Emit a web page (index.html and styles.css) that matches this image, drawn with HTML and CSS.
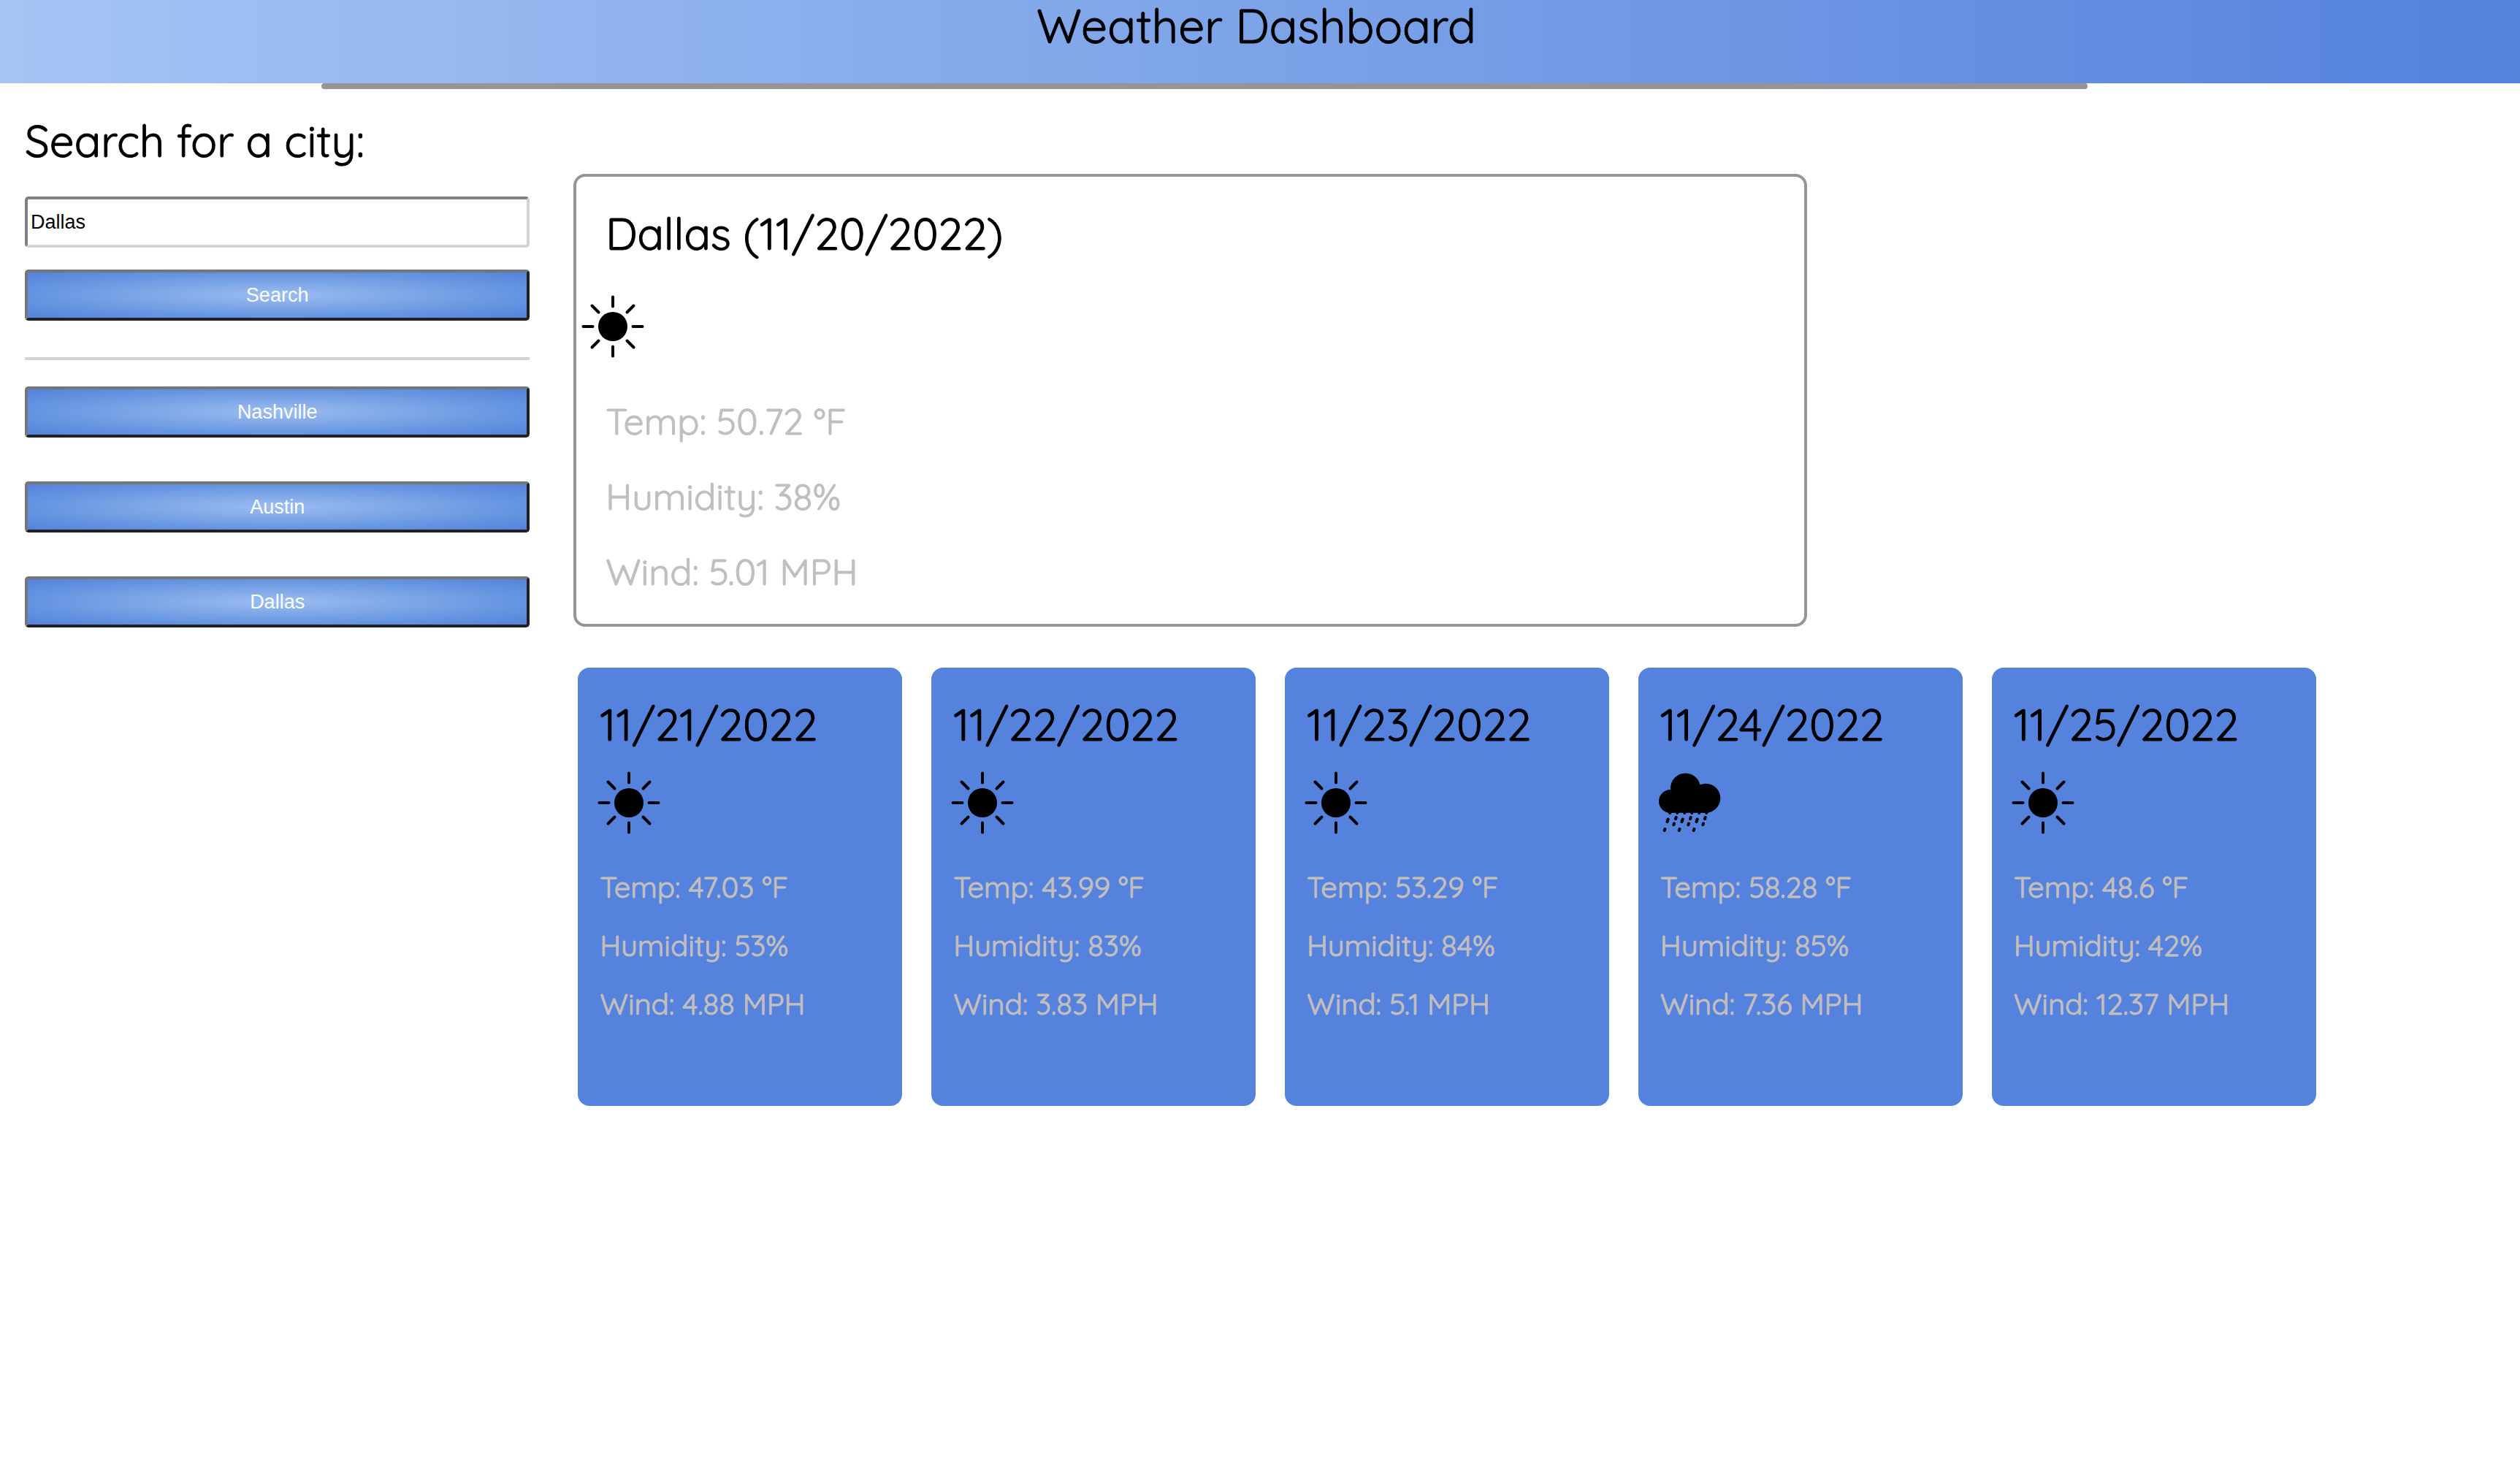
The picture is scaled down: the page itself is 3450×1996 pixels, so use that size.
FILE: index.html
```html
<!DOCTYPE html>
<html lang="en">
<head>
  <meta charset="UTF-8">
  <meta name="viewport" content="width=device-width, initial-scale=1">
  <title>Weather Dashboard</title>
  <link rel="stylesheet" href="styles.css">
</head>
<body>
  <svg class="sprite" aria-hidden="true">
    <symbol id="icon-sun" viewBox="0 0 100 100">
      <circle cx="50" cy="50" r="20"/>
      <path d="M50 9.500V22.500M50 77.500V90.500M9.500 50H22.500M77.500 50H90.500M21.500 21.500L30.500 30.500M69.500 69.500L78.500 78.500M21.500 78.500L30.500 69.500M69.500 30.500L78.500 21.500" fill="none" stroke="#000" stroke-width="4" stroke-linecap="round"/>
    </symbol>
    <symbol id="icon-rain" viewBox="0 0 100 100">
      <circle cx="24" cy="48" r="16"/>
      <circle cx="44.500" cy="30" r="20.500"/>
      <circle cx="72.300" cy="43.700" r="20"/>
      <path d="M24 36H72V63.700H24Z"/>
      <path d="M23.600 63L23.300 64M33.600 63L33.300 64M43.600 63L43.300 64M53.600 63L53.300 64M63.600 63L63.300 64M73.600 63L73.300 64M31.700 70L31 72M51.700 70L51 72M71.700 70L71 72M20.700 72.500L19.500 76M40.700 72.500L39.500 76M60.700 72.500L59.500 76M29 78.500L28.400 80.200M49 78.500L48.400 80.200M69 78.500L68.400 80.200M16.400 86L15.800 88M36.400 86L35.800 88M56.400 86L55.800 88" fill="none" stroke="#000" stroke-width="4" stroke-linecap="round"/>
    </symbol>
  </svg>

  <header class="page-header">
    <h1>Weather Dashboard</h1>
  </header>
  <hr class="header-rule">

  <main class="layout">
    <aside class="sidebar">
      <form class="search" onsubmit="return false">
        <label for="city">Search for a city:</label>
        <input id="city" class="city-input" type="text" value="Dallas">
        <button class="btn" type="submit">Search</button>
      </form>
      <hr class="divider">
      <div class="history">
        <button class="btn" type="button">Nashville</button>
        <button class="btn" type="button">Austin</button>
        <button class="btn" type="button">Dallas</button>
      </div>
    </aside>

    <div class="content">
      <section class="current">
        <h2>Dallas (11/20/2022)</h2>
        <svg class="icon" role="img" aria-label="Clear"><use href="#icon-sun"/></svg>
        <div class="readings">
          <p>Temp: 50.72 °F</p>
          <p>Humidity: 38%</p>
          <p>Wind: 5.01 MPH</p>
        </div>
      </section>

      <section class="forecast">
        <article class="day">
          <h2>11/21/2022</h2>
          <svg class="icon" role="img" aria-label="Clear"><use href="#icon-sun"/></svg>
          <div class="readings">
            <p>Temp: 47.03 °F</p>
            <p>Humidity: 53%</p>
            <p>Wind: 4.88 MPH</p>
          </div>
        </article>
        <article class="day">
          <h2>11/22/2022</h2>
          <svg class="icon" role="img" aria-label="Clear"><use href="#icon-sun"/></svg>
          <div class="readings">
            <p>Temp: 43.99 °F</p>
            <p>Humidity: 83%</p>
            <p>Wind: 3.83 MPH</p>
          </div>
        </article>
        <article class="day">
          <h2>11/23/2022</h2>
          <svg class="icon" role="img" aria-label="Clear"><use href="#icon-sun"/></svg>
          <div class="readings">
            <p>Temp: 53.29 °F</p>
            <p>Humidity: 84%</p>
            <p>Wind: 5.1 MPH</p>
          </div>
        </article>
        <article class="day">
          <h2>11/24/2022</h2>
          <svg class="icon" role="img" aria-label="Rain"><use href="#icon-rain"/></svg>
          <div class="readings">
            <p>Temp: 58.28 °F</p>
            <p>Humidity: 85%</p>
            <p>Wind: 7.36 MPH</p>
          </div>
        </article>
        <article class="day">
          <h2>11/25/2022</h2>
          <svg class="icon" role="img" aria-label="Clear"><use href="#icon-sun"/></svg>
          <div class="readings">
            <p>Temp: 48.6 °F</p>
            <p>Humidity: 42%</p>
            <p>Wind: 12.37 MPH</p>
          </div>
        </article>
      </section>
    </div>
  </main>
</body>
</html>
```
FILE: styles.css
```css
:root {
  --blue: #5482dc;
  --blue-light: #a4c4f4;
  --gray: #969494;
  --muted: #c2bebe;
}

* {
  box-sizing: border-box;
}

body {
  margin: 0;
  background: #fff;
  color: #000;
  font-family: Quicksand, Lato, sans-serif;
}

h1,
h2,
p {
  margin: 0;
}

/* A hairline outline gives the light typeface a little more weight */
h1,
h2,
label,
.readings {
  font-weight: 400;
  -webkit-text-stroke: 1px currentColor;
}

.sprite {
  display: none;
}

/* Header */
.page-header {
  min-height: 114px;
  padding-right: 10px;
  background: linear-gradient(to right, var(--blue-light), var(--blue));
  text-align: center;
}

.page-header h1 {
  font-size: 64px;
  line-height: 70px;
}

.header-rule {
  width: 70.1%;
  height: 8px;
  margin: 0 0 0 12.75%;
  border: 0;
  border-radius: 4px;
  background: var(--gray);
}

/* Two-column layout */
.layout {
  display: flex;
  gap: 60px;
  padding: 0 8.1% 0 34px;
}

.sidebar {
  flex: none;
  width: 22.04%;
  padding-top: 33px;
}

.search {
  display: flex;
  flex-direction: column;
}

.search label {
  margin-bottom: 39px;
  font-size: 60px;
  line-height: 75px;
}

.city-input,
.btn {
  width: 100%;
  height: 70px;
  border: 4px solid;
  border-radius: 5px;
  font-family: "Liberation Sans", Arial, sans-serif;
  font-size: 27px;
}

.city-input {
  margin-bottom: 30px;
  padding: 0 4px;
  border-color: #808080 #d3d3d3 #d3d3d3 #808080;
  background: #fff;
  color: #000;
}

.btn {
  padding: 0;
  border-color: #767676 #212121 #212121 #767676;
  background: radial-gradient(#9bbcf0, #6494e0 70%, var(--blue));
  color: #fff;
  cursor: pointer;
}

.divider {
  height: 4px;
  margin: 50px 0 36px;
  border: 0;
  background: #d3d3d3;
}

.history {
  display: flex;
  flex-direction: column;
  gap: 60px;
}

/* Current conditions */
.content {
  flex: 1;
  min-width: 0;
  padding-top: 116px;
}

.content h2 {
  font-size: 60px;
  line-height: 75px;
}

.icon {
  display: block;
  width: 100px;
  height: 100px;
}

.readings {
  display: flex;
  flex-direction: column;
  color: var(--muted);
}

.current {
  width: 70.8%;
  padding: 40px 0;
  border: 4px solid var(--gray);
  border-radius: 16px;
}

.current h2 {
  padding: 0 40px;
}

.current .icon {
  margin: 40px 0 48px;
}

.current .readings {
  gap: 40px;
  padding: 0 40px;
  font-size: 50px;
  line-height: 63px;
}

/* Five-day forecast */
.forecast {
  display: grid;
  grid-template-columns: repeat(5, 1fr);
  gap: 40px;
  margin: 56px 0 0 6px;
}

.day {
  min-height: 600px;
  padding: 40px 20px;
  border-radius: 16px;
  background: var(--blue);
}

.day h2 {
  padding: 0 10px;
}

.day .icon {
  margin: 20px 0 40px;
}

.day .readings {
  gap: 30px;
  padding: 0 10px;
  font-size: 40px;
  line-height: 50px;
}
```
